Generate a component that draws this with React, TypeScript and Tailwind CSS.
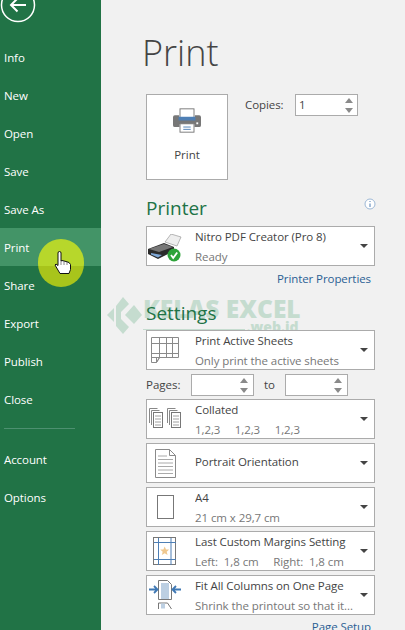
import React from 'react';

const FONT = "font-['Open_Sans','Noto_Sans',sans-serif]";

const navTop = ['Info', 'New', 'Open', 'Save', 'Save As', 'Print', 'Share', 'Export', 'Publish', 'Close'];

const Caret = () => (
  <svg width="10" height="6" viewBox="0 0 10 6" className="shrink-0">
    <path d="M1 1h8L5 5z" fill="#444" />
  </svg>
);

const Spinner = () => (
  <div className="flex flex-col gap-[5px] items-center">
    <svg width="8" height="5" viewBox="0 0 8 5"><path d="M4 0l4 5H0z" fill="#8a8a8a" /></svg>
    <svg width="8" height="5" viewBox="0 0 8 5"><path d="M0 0h8L4 5z" fill="#8a8a8a" /></svg>
  </div>
);

const PrinterIcon = () => (
  <svg width="28" height="25" viewBox="0 0 30 26">
    <rect x="7.5" y="0.5" width="15" height="10" fill="#fff" stroke="#777" />
    <path d="M2 7.5h4.5v3h17v-3H28a2 2 0 0 1 2 2V18a2 2 0 0 1-2 2h-5v-3H7v3H2a2 2 0 0 1-2-2V9.500a2 2 0 0 1 2-2z" fill="#777" />
    <rect x="6" y="9" width="18" height="4" fill="#4e7fb5" />
    <rect x="7.5" y="16.500" width="15" height="9" fill="#fff" stroke="#777" />
    <path d="M11 20h8M11 22.500h8" stroke="#4e7fb5" />
    <rect x="25" y="15" width="2" height="2" fill="#fff" />
  </svg>
);

const NitroIcon = () => (
  <svg width="34" height="28" viewBox="0 0 34 28" className="mt-[3px]">
    <path d="M17 8l6-8 10 3-4 9z" fill="#eee" stroke="#999" strokeWidth=".7" />
    <path d="M0 15l16-6 10 4v4L10 25 0 20z" fill="#2b2b2b" />
    <path d="M1 15l15-5 9 3-14 5z" fill="#777" />
    <path d="M3 19l11 2-4 2.500-7-3z" fill="#7fa8d6" />
    <circle cx="26" cy="21" r="6.500" fill="#2ea33a" />
    <path d="M23 21l2.200 3 4-5.500" stroke="#fff" strokeWidth="1.800" fill="none" />
  </svg>
);

const SheetsIcon = () => (
  <svg width="28" height="26" viewBox="0 0 28 26" fill="none" stroke="#8a8a8a">
    <path d="M.5.500h27v20h-19l-3 5H.5z" fill="#fff" />
    <path d="M.5 6.500h27M.5 16.500h27M.5 20.500h8M8.500.500v20M15.500.500v20M21.500.500v20" />
    <path d="M5.500 25.500l3-5h-3z" />
  </svg>
);

const CollatedIcon = () => (
  <svg width="32" height="22" viewBox="0 0 32 22" fill="none" stroke="#888">
    {[0, 18].map(x => (
      <g key={x}>
        <path d={`M${x + 0.5} 15V.500h8M${x + 2.500} 17V2.500h8`} />
        <rect x={x + 4.500} y="4.500" width="9" height="15" fill="#fff" stroke="#777" />
        <path d={`M${x + 6} 8h6M${x + 6} 11h6M${x + 6} 14h6M${x + 6} 17h6`} strokeWidth=".8" />
      </g>
    ))}
  </svg>
);

const PortraitIcon = () => (
  <svg width="21" height="29" viewBox="0 0 21 29" fill="none" stroke="#8a8a8a">
    <path d="M.5.500h14l6 6v22H.5z" fill="#fff" />
    <path d="M14.500.500v6h6" />
    <path d="M3 7h9M3 10.500h15M3 14h15M3 17.500h15M3 21h15M3 24.500h15" stroke="#aaa" />
  </svg>
);

const MarginsIcon = () => (
  <svg width="24" height="29" viewBox="0 0 24 29" fill="none">
    <rect x=".5" y=".5" width="22" height="27" fill="#fff" stroke="#777" />
    <path d="M5.500 1v27M18 1v27M1 5.500h22M1 22.500h22" stroke="#4e7fb5" />
    <path d="M11.700 9.500l1.300 3h3.200l-2.500 2.200.9 3.300-2.900-1.800-2.900 1.800.9-3.300-2.500-2.200h3.200z" fill="#efc88f" />
  </svg>
);

const FitIcon = () => (
  <svg width="32" height="30" viewBox="0 0 32 30" fill="none">
    <path d="M9.500.500h9l4 4v15h-13z" fill="#fff" stroke="#777" />
    <rect x="12" y="3" width="8" height="16" fill="#bccfe2" />
    <path d="M0 9.500h8M5 6l3.500 3.500L5 13" stroke="#3f78b4" strokeWidth="1.800" />
    <path d="M32 9.500h-8M27 6l-3.500 3.500L27 13" stroke="#3f78b4" strokeWidth="1.800" />
    <path d="M9.500 29v-6h9l4 6" fill="#fff" stroke="#777" />
    <rect x="12" y="23.500" width="4" height="5" fill="#bccfe2" />
  </svg>
);

const Select: React.FC<{ icon: React.ReactNode; title: string; sub?: string }> = ({ icon, title, sub }) => (
  <div className="h-10 w-[229px] bg-white border border-[#ababab] flex items-center pr-[5px]">
    <div className="w-[36px] mr-[12px] shrink-0 flex justify-center">{icon}</div>
    <div className={`flex-1 flex flex-col gap-[3px] text-[11.5px] tracking-[-0.08px] leading-[17px] whitespace-pre overflow-hidden ${sub ? '' : 'pb-[3px]'}`}>
      <span className="text-[#444]">{title}</span>
      {sub && <span className="text-[#777]">{sub}</span>}
    </div>
    <Caret />
  </div>
);

const PageBox = () => (
  <div className="w-[63px] h-[22px] bg-white border border-[#ababab] flex items-center justify-end pr-[5px]">
    <Spinner />
  </div>
);

export default function App() {
  return (
    <div className={`${FONT} relative w-[405px] h-[630px] overflow-hidden bg-[#f1f1f1] flex`}>
      {/* watermark, sits behind the panels */}
      <div className="absolute left-[107px] top-[297px] flex text-[#c5dccf]">
        <svg width="36" height="37" viewBox="0 0 36 37">
          <path d="M0 18l7-7v14z" fill="#c5dccf" />
          <path d="M9 9l7-9 6 7-8 8v7l8 8-6 7-7-8z" fill="#c5dccf" />
          <path d="M18 18l9-10 8 10-8 9z" fill="#c5dccf" />
        </svg>
        <div className="flex flex-col items-end">
          <span className="text-[24.5px] leading-[23px] font-extrabold">KELAS EXCEL</span>
          <span className="text-[14px] leading-[14px] font-extrabold mr-[2px]">.web.id</span>
        </div>
      </div>
      <div className="absolute left-[143px] top-[329px] w-[102px] h-px bg-[#c5dccf]" />

      <aside className="w-[101px] shrink-0 bg-[#217346] text-white text-[11.5px] tracking-[-0.08px] flex flex-col">
        <div className="h-[38px] relative">
          <svg width="36" height="24" viewBox="0 0 36 24" className="absolute left-0 top-0">
            <circle cx="18" cy="5" r="16.500" fill="none" stroke="#fff" strokeWidth="1.500" />
            <path d="M26 5H11M17.500 -1.500L11 5l6.500 6.500" fill="none" stroke="#fff" strokeWidth="2" />
          </svg>
        </div>
        {navTop.map(n => (
          <div key={n} className={`h-[38px] shrink-0 flex items-center pl-1 pt-[2px] ${n === 'Print' ? 'bg-[#439467]' : ''}`}>{n}</div>
        ))}
        <div className="h-px w-[71px] bg-[#4d9070] ml-1 mt-[10px] mb-[11px]" />
        <div className="h-[38px] shrink-0 flex items-center pl-1 pt-[2px]">Account</div>
        <div className="h-[38px] shrink-0 flex items-center pl-1 pt-[2px]">Options</div>
      </aside>

      <main className="relative flex-1 pl-[45px] flex flex-col items-start">
        <h1 className="text-[36px] leading-[44px] font-light text-[#444] -ml-[4px] mt-[31px] mb-[19px]">Print</h1>
        <div className="flex items-start">
          <div className="w-[82px] h-[86px] bg-white border border-[#ababab] flex flex-col items-center pt-[13px] gap-[12px]">
            <PrinterIcon />
            <span className="text-[11.5px] leading-[20px] font-medium text-[#444]">Print</span>
          </div>
          <span className="ml-[17px] w-[50px] text-[11.5px] tracking-[-0.08px] leading-[22px] text-[#444]">Copies:</span>
          <div className="w-[63px] h-[22px] bg-white border border-[#ababab] flex items-center justify-between pl-[3px] pr-[4px] text-[11.5px] text-[#444]">
            1
            <Spinner />
          </div>
        </div>

        <div className="w-[229px] flex items-center justify-between mt-[15px]">
          <h2 className="text-[19px] leading-[26px] text-[#217346]">Printer</h2>
          <svg width="12" height="12" viewBox="0 0 12 12" className="mb-[9px] mr-[-1px]">
            <circle cx="6" cy="6" r="5" fill="#fff" stroke="#9db8d6" />
            <path d="M6 3v1M6 5.500V9" stroke="#4e7fb5" />
          </svg>
        </div>
        <div className="mt-[5px]">
          <Select icon={<NitroIcon />} title="Nitro PDF Creator (Pro 8)" sub="Ready" />
        </div>
        <div className="w-[225px] text-right text-[11.5px] tracking-[-0.08px] leading-[18px] text-[#2b5f94] mt-1">Printer Properties</div>

        <h2 className="text-[19px] leading-[26px] text-[#217346] mt-[12px]">Settings</h2>
        <div className="mt-[4px]">
          <Select icon={<SheetsIcon />} title="Print Active Sheets" sub="Only print the active sheets" />
        </div>
        <div className="flex items-center h-[22px] mt-[4px] mb-[3px] text-[11.5px] text-[#444]">
          <span className="w-[45px]">Pages:</span>
          <PageBox />
          <span className="w-[31px] text-center">to</span>
          <PageBox />
        </div>
        <div className="flex flex-col gap-1">
          <Select icon={<CollatedIcon />} title="Collated" sub="1,2,3     1,2,3     1,2,3" />
          <Select icon={<PortraitIcon />} title="Portrait Orientation" />
          <Select icon={<div className="w-[17px] h-[24px] bg-white border border-[#777]" />} title="A4" sub="21 cm x 29,7 cm" />
          <Select icon={<MarginsIcon />} title="Last Custom Margins Setting" sub="Left:  1,8 cm     Right:  1,8 cm" />
          <Select icon={<FitIcon />} title="Fit All Columns on One Page" sub="Shrink the printout so that it..." />
        </div>
        <div className="w-[225px] text-right text-[11.5px] tracking-[-0.08px] leading-[18px] text-[#2b5f94] mt-[3px]">Page Setup</div>
      </main>

      {/* cursor highlight */}
      <div className="absolute left-[38px] top-[239px] w-[46px] h-[48px] rounded-full bg-gradient-to-b from-[#b7d72b] from-[56%] to-[#a8c41b] to-[56%] flex items-center justify-center">
        <svg width="18" height="24" viewBox="0 0 18 24" className="ml-[3px]">
          <path d="M4 2a1.500 1.500 0 0 1 3 0v8l1-.5 2 .5 2 .5 3 1 1.500 2v5l-1.500 4H6L1 14l1-1 2 1.500z" fill="#fff" stroke="#111" strokeWidth="1" />
          <path d="M7 10v4M10 10.500v3.500M13 11v3" stroke="#555" strokeWidth=".7" />
        </svg>
      </div>
    </div>
  );
}
